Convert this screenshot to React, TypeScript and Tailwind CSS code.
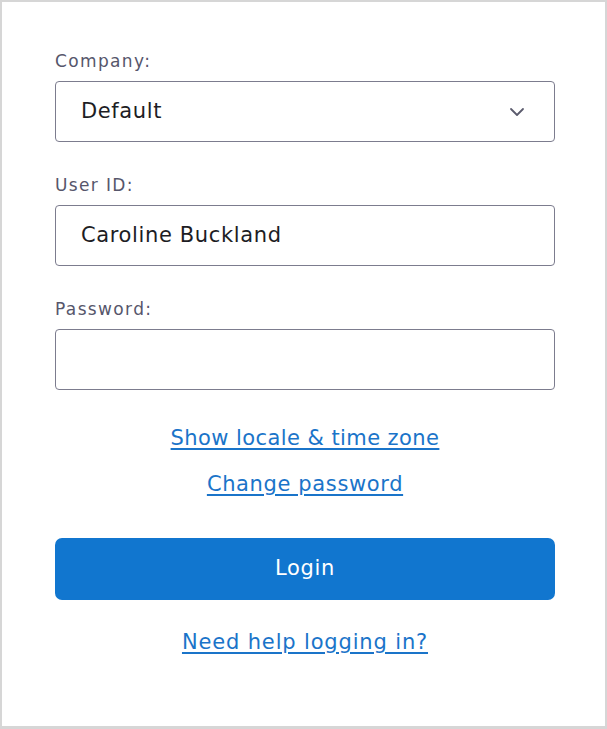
import React from 'react';

const font = { fontFamily: '"DejaVu Sans", "Noto Sans", sans-serif' };

function Field({ label, children, top }: { label: string; children: React.ReactNode; top: string }) {
  return (
    <div className={`flex flex-col ${top}`}>
      <label className="text-[17px] leading-[20px] tracking-[0.08em] text-[#56566b]">{label}</label>
      <div className="mt-[10px] h-[61px] rounded-[4px] border border-[#7c7c8e] bg-white flex items-center px-[25px]">
        {children}
      </div>
    </div>
  );
}

export default function App() {
  return (
    <div className="w-[607px] h-[729px] bg-white border-2 border-b-[3px] border-[#d6d6d6]" style={font}>
      <div className="pl-[53px] pr-[50px] pt-[49px] flex flex-col">
        <Field label="Company:" top="">
          <span className="flex-1 text-[21px] tracking-[0.03em] text-[#1d1d24]">Default</span>
          <svg width="16" height="10" viewBox="0 0 16 10" className="mr-[4px]">
            <path d="M2 2 L8 8 L14 2" fill="none" stroke="#5b5b6d" strokeWidth="1.8" strokeLinecap="round" strokeLinejoin="round" />
          </svg>
        </Field>
        <Field label="User ID:" top="mt-[33px]">
          <span className="text-[21px] tracking-[0.03em] text-[#1d1d24]">Caroline Buckland</span>
        </Field>
        <Field label="Password:" top="mt-[33px]">
          <span />
        </Field>

        <div className="mt-[35px] flex flex-col items-center gap-[20px]">
          <a href="#" className="text-[21px] leading-[26px] tracking-[0.02em] text-[#1a74c9] underline underline-offset-[3px]">
            Show locale &amp; time zone
          </a>
          <a href="#" className="text-[21px] leading-[26px] tracking-[0.03em] text-[#1a74c9] underline underline-offset-[3px]">
            Change password
          </a>
        </div>

        <button className="mt-[41px] h-[62px] w-full rounded-[7px] bg-[#1176cf] text-white text-[21px] tracking-[0.03em]">
          Login
        </button>

        <div className="mt-[29px] flex justify-center">
          <a href="#" className="text-[21px] leading-[26px] tracking-[0.04em] text-[#1a74c9] underline underline-offset-[3px]">
            Need help logging in?
          </a>
        </div>
      </div>
    </div>
  );
}
